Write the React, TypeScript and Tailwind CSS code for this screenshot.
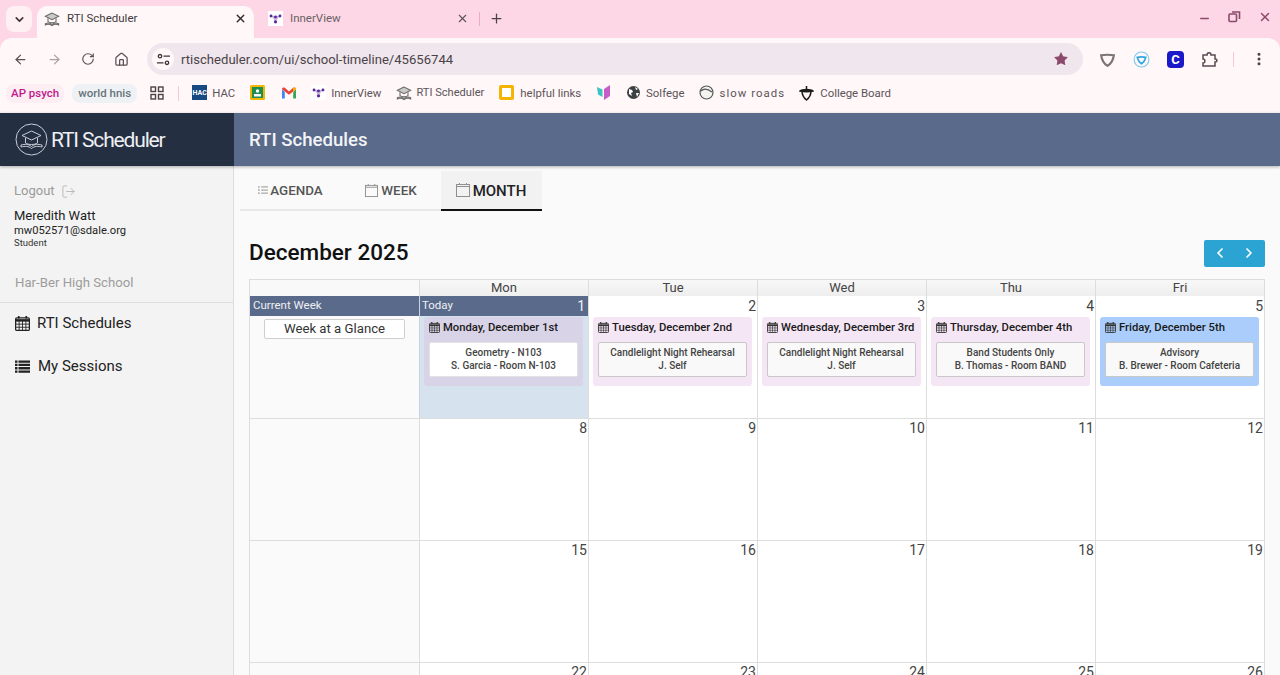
import React from "react";
import { ChevronDown, X, Plus, ArrowLeft, ArrowRight, RotateCw, Home, Star, MoreVertical, Minus, ChevronLeft, ChevronRight, LogOut } from "lucide-react";
import { FaListUl } from "react-icons/fa";

const font = "font-['Roboto',sans-serif]";

const SchoolIcon = ({ size = 18 }: { size?: number }) => (
  <svg width={size} height={size} viewBox="0 0 24 24" fill="none" stroke="#6b6b6b" strokeWidth="1.6">
    <path d="M12 3 2 8l10 5 10-5z" fill="#c9c9c9" />
    <path d="M6 11v5c2 2 10 2 12 0v-5" />
    <path d="M2 19c4-2 7-1 10 1 3-2 6-3 10-1v2c-4-2-7-1-10 1-3-2-6-3-10-1z" fill="#dcdcdc" />
  </svg>
);

const InnerViewIcon = () => (
  <span className="flex h-[15px] w-[15px] items-center justify-center bg-white">
    <svg width="13" height="13" viewBox="0 0 16 16" fill="#5b2a9d">
      <circle cx="2.5" cy="5" r="1.8" />
      <circle cx="13.5" cy="5" r="1.8" />
      <circle cx="8" cy="6" r="1.8" />
      <circle cx="8" cy="12" r="2" />
      <path d="M3 5h10L8 12z" fillOpacity=".35" />
    </svg>
  </span>
);

const OutlineCalendar = ({ size = 14 }: { size?: number }) => (
  <svg width={size} height={size} viewBox="0 0 14 14" fill="none" stroke="#8f8f8f" strokeWidth="1">
    <rect x=".5" y="1.5" width="13" height="12" />
    <path d="M.5 3.5h13M3.5 0v2M10.5 0v2" />
  </svg>
);

// the grid calendar used in the sidebar and on the day cards
const GridCalendar = ({ size = 11, color = "#333" }: { size?: number; color?: string }) => (
  <svg width={size} height={size} viewBox="0 0 12 12" fill="none" stroke={color} className="shrink-0">
    <rect x=".5" y="1.500" width="11" height="10" rx="1" strokeWidth="1" />
    <path d="M.5 3.500h11" strokeWidth="2" />
    <path d="M3 0v2M9 0v2" strokeWidth="1.300" />
    <path d="M.5 6.500h11M.5 9h11M3.300 4v7.500M6 4v7.500M8.700 4v7.500" strokeWidth=".7" />
  </svg>
);

const StackedList = () => (
  <svg width="15" height="13" viewBox="0 0 15 13" fill="#222" className="shrink-0">
    <path d="M0 .5h2.500v2.300H0zM3.500 .5H15v2.300H3.500zM0 3.800h2.500v2.300H0zM3.500 3.800H15v2.300H3.500zM0 7.100h2.500v2.300H0zM3.500 7.100H15v2.300H3.500zM0 10.400h2.500v2.300H0zM3.500 10.400H15v2.300H3.500z" />
  </svg>
);

const Bookmark = ({ icon, label, className = "", gap = "gap-[5px]" }: { icon: React.ReactNode; label?: string; className?: string; gap?: string }) => (
  <div className={`flex items-center ${gap}`}>
    {icon}
    {label && <span className={`mt-[1px] text-[#5b5458] ${className || "text-[11.400px]"}`}>{label}</span>}
  </div>
);

function Browser() {
  return (
    <div className="h-[113px] shrink-0 bg-[#fdd7e5]">
      {/* tab strip */}
      <div className="relative flex h-[38px] pl-[6px] pt-[6px]">
        <div className="mr-[5px] flex h-[26px] w-[26px] items-center justify-center rounded-lg bg-[#fff0f4]">
          <ChevronDown size={13} strokeWidth={3} className="text-[#3c3438]" />
        </div>
        <div className="flex h-[32px] w-[217px] items-center rounded-t-[10px] bg-[#fff7f8] pb-[7px] pl-[7px] pr-[7px]">
          <SchoolIcon size={16} />
          <span className="ml-[7px] flex-1 text-[11.500px] text-[#3f3a3d]">RTI Scheduler</span>
          <X size={13} strokeWidth={2.500} className="text-[#2f2a2d]" />
        </div>
        <div className="flex h-[32px] w-[250px] items-center pb-[7px] pl-[14px]">
          <InnerViewIcon />
          <span className="ml-[7px] flex-1 text-[11.500px] text-[#6a6166]">InnerView</span>
          <X size={13} strokeWidth={2} className="text-[#5a5256]" />
          <span className="ml-[10px] h-[14px] w-px bg-[#f2a9c4]" />
          <Plus size={15} strokeWidth={2} className="ml-[9px] text-[#4a4246]" />
        </div>
        <div className="ml-auto flex items-start gap-[17px] pr-[8px] pt-[4px] text-[#8b4a6b]">
          <Minus size={13} strokeWidth={2.500} className="mt-[2px]" />
          <svg width="13" height="13" viewBox="0 0 13 13" fill="none" stroke="currentColor" strokeWidth="1.600">
            <rect x="1" y="4" width="7.500" height="7.500" rx="1" />
            <path d="M4 2h7.500v7" />
          </svg>
          <X size={14} strokeWidth={2.500} />
        </div>
      </div>

      <div className="h-[75px] rounded-t-[12px] bg-[#fff7f8]">
        {/* toolbar */}
        <div className="flex h-[37px] items-center pt-[5px]">
          <div className="flex w-[147px] items-center pl-[13px] text-[#5a5256]">
            <ArrowLeft size={15} strokeWidth={2} />
            <ArrowRight size={15} strokeWidth={2} className="ml-[19px] text-[#aaa3a6]" />
            <RotateCw size={14} strokeWidth={2} className="ml-[19px]" />
            <Home size={15} strokeWidth={2} className="ml-[19px]" />
          </div>
          <div className="flex h-[32px] w-[936px] items-center rounded-full bg-[#f0e6ed] pl-[5px] pr-[14px]">
            <span className="flex h-[22px] w-[22px] items-center justify-center rounded-full bg-[#fff7f8]">
              <svg width="13" height="13" viewBox="0 0 13 13" fill="none" stroke="#3c3438" strokeWidth="1.300">
                <circle cx="3" cy="3.200" r="1.700" />
                <path d="M6.500 3.200H13M0 9.800h6.500" />
                <circle cx="10" cy="9.800" r="1.700" />
              </svg>
            </span>
            <span className="ml-[7px] mt-[1px] flex-1 text-[13.100px] text-[#4a4347]">
              rtischeduler.com/ui/school-timeline/45656744
            </span>
            <Star size={16} fill="#8b4a6b" strokeWidth={0} />
          </div>
          <div className="flex flex-1 items-center pl-[16px]">
            <svg width="17" height="17" viewBox="0 0 24 24" fill="none" stroke="#7a7578" strokeWidth="3">
              <path d="M3 6c6-1 12-1 18 0-1 7-4 12-9 15C7 18 4 13 3 6z" />
            </svg>
            <svg width="17" height="17" viewBox="0 0 24 24" fill="none" className="ml-[17px]">
              <circle cx="12" cy="12" r="10.500" stroke="#7cc8ee" strokeWidth="1.500" />
              <path d="M6 9c4-1 8-1 12 0-1 4-3 7-6 9-3-2-5-5-6-9z" stroke="#2ea8e0" strokeWidth="2.500" />
            </svg>
            <span className="ml-[17px] flex h-[17px] w-[17px] items-center justify-center rounded-[4px] bg-[#1a1ac8] text-[13px] font-bold leading-none text-white">
              C
            </span>
            <svg width="17" height="17" viewBox="0 0 17 17" fill="none" stroke="#5a4a50" strokeWidth="1.500" className="ml-[17px]">
              <path d="M2 4h4c0-3 4-3 4 0h4v4c2.500 0 2.500 3 0 3v4H2v-3c2.500 0 2.500-4 0-4z" />
            </svg>
            <span className="ml-[15px] h-[15px] w-px bg-[#f7c6d8]" />
            <MoreVertical size={16} strokeWidth={2.500} className="ml-[17px] text-[#4a3f44]" />
          </div>
        </div>

        {/* bookmarks */}
        <div className="flex h-[38px] items-center pb-[2px] pl-[6px]">
          <span className="rounded-lg bg-[#fdeef4] px-[5px] py-[2px] text-[11.500px] font-medium leading-[15px] text-[#c2188b]">AP psych</span>
          <span className="ml-[8px] rounded-lg bg-[#eff2f4] px-[6px] py-[2px] text-[11.500px] font-medium leading-[15px] text-[#69727a]">world hnis</span>
          <svg width="14" height="14" viewBox="0 0 14 14" fill="none" stroke="#4a4347" strokeWidth="1.400" className="ml-[13px]">
            <rect x="1" y="1" width="4.500" height="4.500" />
            <rect x="8.500" y="1" width="4.500" height="4.500" />
            <rect x="1" y="8.500" width="4.500" height="4.500" />
            <rect x="8.500" y="8.500" width="4.500" height="4.500" />
          </svg>
          <span className="ml-[14px] h-[15px] w-px bg-[#f7c6d8]" />
          <div className="ml-[13px] flex items-center gap-[15px]">
            <Bookmark
              icon={<span className="flex h-[15px] w-[15px] items-center justify-center bg-[#164a80] text-[7px] font-bold text-white">HAC</span>}
              label="HAC"
            />
            <svg width="15" height="15" viewBox="0 0 15 15">
              <rect width="15" height="15" rx="1.500" fill="#f2b705" />
              <rect x="2" y="2" width="11" height="11" fill="#1e8e4e" />
              <circle cx="7.500" cy="6" r="1.700" fill="#fff" />
              <rect x="4" y="9" width="7" height="2.500" fill="#fff" />
            </svg>
            <svg width="14" height="12" viewBox="0 0 15 12" className="ml-[2px]">
              <path d="M0 2v10h3V5z" fill="#4285f4" />
              <path d="M15 2v10h-3V5z" fill="#34a853" />
              <path d="M0 2c0-2 2-2.500 3-1.500l4.500 4 4.500-4c1-1 3-.5 3 1.500l-7.500 6z" fill="#ea4335" />
              <path d="M12 .5c1-1 3-.5 3 1.500L12 5z" fill="#fbbc04" />
            </svg>
            <Bookmark icon={<InnerViewIcon />} label="InnerView" />
            <Bookmark icon={<SchoolIcon size={16} />} label="RTI Scheduler" gap="gap-[4px]" className="text-[11.100px]" />
            <Bookmark
              icon={<span className="h-[15px] w-[15px] rounded-[2px] border-[3px] border-[#f5b400] bg-white" />}
              label="helpful links"
              gap="gap-[6px]"
            />
            <svg width="15" height="15" viewBox="0 0 15 15">
              <path d="M1 2l5.500 2.500V12L2 9.500z" fill="#3cc4c0" />
              <path d="M14 0v11l-6 4V4z" fill="#c65cc8" />
            </svg>
            <Bookmark
              icon={
                <svg width="15" height="15" viewBox="0 0 15 15">
                  <circle cx="7.500" cy="7.500" r="6.500" fill="#3c4043" />
                  <path d="M3 4l3 1 1 2-2 1 1 3-3-2zM9 2l3 2-2 1zM10 8l3 0-2 4z" fill="#fff" />
                </svg>
              }
              label="Solfege"
            />
            <Bookmark
              icon={
                <svg width="15" height="15" viewBox="0 0 15 15" fill="#f4f4ee" stroke="#55595a" strokeWidth="1.200">
                  <circle cx="7.500" cy="7.500" r="6.500" />
                  <path d="M2 6c3-3 7-2 11 1" fill="none" />
                </svg>
              }
              label="slow roads"
              className="text-[11.400px] tracking-[1.050px]"
            />
            <div className="ml-[-1px]">
              <Bookmark
                icon={
                  <svg width="15" height="16" viewBox="0 0 15 16" fill="none" stroke="#1b1b1b" strokeWidth="1.500">
                    <path d="M3 6c0 5 2 7 4.500 9C10 13 12 11 12 6" />
                    <path d="M1 6c2-2 11-2 13 0-3 1-10 1-13 0z" fill="#1b1b1b" />
                    <path d="M7.500 4V1" />
                  </svg>
                }
                label="College Board"
                gap="gap-[6px]"
              />
            </div>
          </div>
        </div>
      </div>
    </div>
  );
}

function Sidebar() {
  return (
    <aside className="w-[234px] shrink-0 border-r border-[#dcdcdc] bg-[#f3f3f3]">
      <div className="flex items-center pl-[14px] pt-[17px] text-[13px] leading-[16px] text-[#9a9a9a]">
        Logout
        <LogOut size={15} strokeWidth={1.200} className="ml-[6px] text-[#a8a8a8]" />
      </div>
      <div className="pl-[14px] pt-[9px] text-[#1e1e1e]">
        <div className="text-[13px] leading-[16px]">Meredith Watt</div>
        <div className="text-[11.200px] leading-[13px]">mw052571@sdale.org</div>
        <div className="text-[9.500px] leading-[12px] text-[#333]">Student</div>
      </div>
      <div className="mt-[25px] border-b border-[#dddddd] pb-[10px] pl-[15px] text-[13.200px] leading-[18px] text-[#9c9c9c]">
        Har-Ber High School
      </div>
      <div className="flex h-[42px] items-center pb-[2px] pl-[15px] text-[15px] text-[#222]">
        <GridCalendar size={15} color="#222" />
        <span className="ml-[7px]">RTI Schedules</span>
      </div>
      <div className="flex h-[42px] items-center pl-[15px] text-[15px] text-[#222]">
        <StackedList />
        <span className="ml-[8px]">My Sessions</span>
      </div>
    </aside>
  );
}

const Tab = ({ icon, label, active, width }: { icon: React.ReactNode; label: string; active?: boolean; width: string }) => (
  <div
    className={`flex h-[40px] items-center justify-center gap-[3px] ${width} ${
      active ? "border-b-2 border-[#111] bg-[#f2f2f2] pr-[1px] text-[#222]" : "border-b-2 border-[#e8e8e8] text-[#555]"
    }`}
  >
    {icon}
    <span className={`mt-[3px] font-medium ${active ? "text-[15px]" : "text-[13.400px]"}`}>{label}</span>
  </div>
);

type Session = { title: string; line1: string; line2: string; bg: string; inner: string };

const sessions: Session[] = [
  { title: "Monday, December 1st", line1: "Geometry - N103", line2: "S. Garcia - Room N-103", bg: "bg-[#d9d3e8]", inner: "bg-white border-[#e2e2e2]" },
  { title: "Tuesday, December 2nd", line1: "Candlelight Night Rehearsal", line2: "J. Self", bg: "bg-[#f5e6f6]", inner: "bg-[#f9f9f9] border-[#c8c8c8]" },
  { title: "Wednesday, December 3rd", line1: "Candlelight Night Rehearsal", line2: "J. Self", bg: "bg-[#f5e6f6]", inner: "bg-[#f9f9f9] border-[#c8c8c8]" },
  { title: "Thursday, December 4th", line1: "Band Students Only", line2: "B. Thomas - Room BAND", bg: "bg-[#f5e6f6]", inner: "bg-[#f9f9f9] border-[#c8c8c8]" },
  { title: "Friday, December 5th", line1: "Advisory", line2: "B. Brewer - Room Cafeteria", bg: "bg-[#abcdfb]", inner: "bg-[#f9f9f9] border-[#c8c8c8]" },
];

const SessionCard = ({ s }: { s: Session }) => (
  <div className={`ml-[4px] mr-[5px] h-[69px] rounded-[3px] px-[5px] ${s.bg}`}>
    <div className="flex h-[21px] items-center gap-[3px] text-[11.250px] font-medium leading-none text-[#1a1a1a]">
      <GridCalendar />
      <span className="whitespace-nowrap">{s.title}</span>
    </div>
    <div className={`mt-[4px] h-[35px] rounded-[2px] border pt-[3px] text-center text-[10px] font-medium leading-[13px] text-[#444] ${s.inner}`}>
      <div>{s.line1}</div>
      <div>{s.line2}</div>
    </div>
  </div>
);

const days = ["Mon", "Tue", "Wed", "Thu", "Fri"];
const gridCols = "grid-cols-[repeat(6,169px)]";

function Calendar() {
  const weeks = [
    [8, 9, 10, 11, 12],
    [15, 16, 17, 18, 19],
    [22, 23, 24, 25, 26],
  ];
  return (
    <div className="border-l border-r border-t border-[#dddddd]">
      <div className={`grid ${gridCols} h-[16px]`}>
        <div className="bg-[#f9f9f9]" />
        {days.map((d) => (
          <div key={d} className="border-l border-[#dddddd] bg-gradient-to-b from-[#f8f8f8] to-[#eeeeee] text-center text-[13px] leading-[15px] text-[#444]">
            {d}
          </div>
        ))}
      </div>
      <div className={`grid ${gridCols} h-[123px] border-b border-[#dddddd]`}>
        <div>
          <div className="flex h-[20px] items-center bg-[#5a6a8a] pl-[3px] text-[11.500px] text-[#eef0f4]">Current Week</div>
          <div className="mx-[14px] mt-[3px] h-[20px] rounded-[2px] border border-[#cfcfcf] bg-white text-center text-[13.200px] leading-[17px] text-[#333]">
            Week at a Glance
          </div>
        </div>
        <div className="border-l border-[#c9d6e2] bg-[#d6e3ee]">
          <div className="flex h-[20px] items-center justify-between bg-[#5a6a8a] pl-[2px] pr-[3px] text-[11.500px] text-[#eef0f4]">
            <span>Today</span>
            <span className="text-[14px]">1</span>
          </div>
          <div className="pt-[1px]">
            <SessionCard s={sessions[0]} />
          </div>
        </div>
        {sessions.slice(1).map((s, i) => (
          <div key={s.title} className="border-l border-[#dddddd] bg-white">
            <div className="h-[20px] pr-[1px] text-right text-[14px] leading-[20px] text-[#444]">{i + 2}</div>
            <div className="pt-[1px]">
              <SessionCard s={s} />
            </div>
          </div>
        ))}
      </div>
      {weeks.map((w) => (
        <div key={w[0]} className={`grid ${gridCols} h-[122px] border-b border-[#dddddd]`}>
          <div />
          {w.map((n) => (
            <div key={n} className="border-l border-[#dddddd] bg-white pr-[1px] text-right text-[14px] leading-[19px] text-[#444]">
              {n}
            </div>
          ))}
        </div>
      ))}
    </div>
  );
}

export default function App() {
  return (
    <div className={`${font} flex h-[675px] w-[1280px] flex-col overflow-hidden bg-[#fafafa]`}>
      <Browser />
      <header className="z-10 flex h-[53px] shrink-0 shadow-[0_1px_3px_rgba(0,0,0,0.3)]">
        <div className="flex w-[234px] items-center bg-[#252f42] pl-[15px]">
          <svg width="33" height="33" viewBox="0 0 33 33" fill="none" stroke="#c9ced6" strokeWidth="1">
            <circle cx="16.500" cy="16.500" r="15.500" />
            <path d="M16.500 8 7 12.500l9.500 4.500L26 12.500z" />
            <path d="M10.500 15v5c3 2 9 2 12 0v-5" />
            <path d="M6 22c4-1 7.500-1 10.500 1.500C19.500 21 23 21 27 22v2c-4-1-7.500-1-10.500 1.500C13.500 23 10 23 6 24z" />
          </svg>
          <span className="ml-[3px] mt-[2px] whitespace-nowrap text-[21px] tracking-[-1.150px] text-[#eef0f3]">RTI Scheduler</span>
        </div>
        <div className="flex flex-1 items-center bg-[#5a6a8a] pl-[15px] pt-[2px] text-[18.600px] font-medium text-[#f2f4f7]">
          RTI Schedules
        </div>
      </header>
      <div className="flex min-h-0 flex-1">
        <Sidebar />
        <main className="min-w-0 flex-1 px-[15px]">
          <div className="ml-[-9px] flex pt-[5px]">
            <Tab width="w-[101px]" label="AGENDA" icon={<span className="mr-[-1px] flex"><FaListUl size={10} className="text-[#aaa]" /></span>} />
            <Tab width="w-[100px]" label="WEEK" icon={<OutlineCalendar size={13} />} />
            <Tab width="w-[101px]" label="MONTH" active icon={<OutlineCalendar size={14} />} />
          </div>
          <div className="flex h-[68px] items-center justify-between pt-[16px]">
            <h1 className="text-[22.500px] font-medium text-[#111]">December 2025</h1>
            <div className="flex h-[27px] w-[61px] items-center justify-around rounded-[2px] bg-[#2ba3d3] px-[2px] text-white">
              <ChevronLeft size={16} strokeWidth={2.500} />
              <ChevronRight size={16} strokeWidth={2.500} />
            </div>
          </div>
          <Calendar />
        </main>
      </div>
    </div>
  );
}
